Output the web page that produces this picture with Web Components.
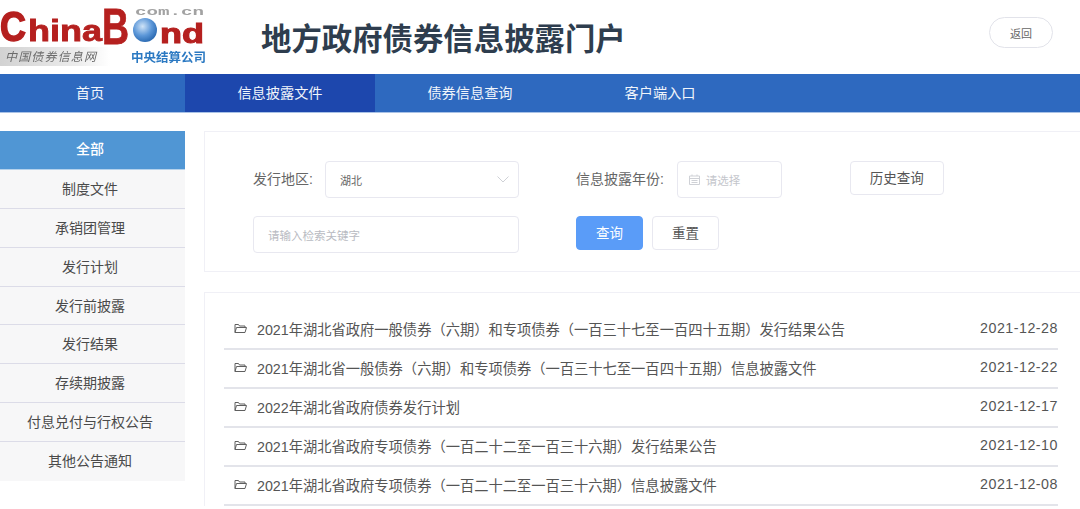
<!DOCTYPE html>
<html>
  <head>
    <meta charset="utf-8" />
    <meta name="viewport" content="width=device-width,initial-scale=1" />
    <title>地方政府债券信息披露门户</title>
    <style>
      html, body {
        margin: 0;
        height: 509px;
        overflow: hidden;
        background: #fff;
        font-family: "Liberation Sans", "Noto Sans CJK SC", sans-serif;
      }
    </style>

    <template id="headerTemplate">
      <style>
        :host {
          display: flex;
          align-items: flex-start;
          height: 74px;
          color: #2f3f50;
        }
        svg {
          display: block;
          flex: none;
          filter: blur(0.7px);
        }
        h1 {
          margin: 0 0 0 53px;
          font-size: 30.4px;
          line-height: 78px;
          font-weight: 700;
          color: #2e3d4e;
          flex: 1;
        }
        button {
          width: 64px;
          height: 31px;
          margin: 17px 27px 0 0;
          padding: 0;
          border: 1px solid #e2e3ea;
          border-radius: 16px;
          background: #fff;
          color: #666;
          font: 11px "Liberation Sans", "Noto Sans CJK SC", sans-serif;
        }
      </style>
      <svg width="208" height="74" viewBox="0 0 208 74">
        <defs>
          <radialGradient id="globe" cx="0.4" cy="0.35" r="0.7">
            <stop offset="0" stop-color="#cfe3f7" />
            <stop offset="0.55" stop-color="#5c97d8" />
            <stop offset="1" stop-color="#2565ae" />
          </radialGradient>
          <linearGradient id="band" x1="0" x2="1" y1="0" y2="0">
            <stop offset="0" stop-color="#d2d2d2" />
            <stop offset="0.7" stop-color="#ececec" />
            <stop offset="1" stop-color="#fff" />
          </linearGradient>
        </defs>
        <rect x="0" y="47" width="110" height="19" fill="url(#band)" />
        <g font-family="Liberation Sans" font-weight="700" fill="#b5201f" stroke="#b5201f">
          <text x="0" y="41" font-size="42" stroke-width="1.5" textLength="26" lengthAdjust="spacingAndGlyphs">C</text>
          <text x="28" y="41" font-size="29" stroke-width="0.8" textLength="74" lengthAdjust="spacingAndGlyphs">hina</text>
          <text x="102" y="44" font-size="50" stroke-width="0.8" textLength="27" lengthAdjust="spacingAndGlyphs">B</text>
          <text x="160" y="43" font-size="27" stroke-width="1" textLength="44" lengthAdjust="spacingAndGlyphs">nd</text>
        </g>
        <circle cx="145" cy="30" r="12" fill="url(#globe)" />
        <text x="135" y="14.500" font-family="Liberation Mono" font-weight="700" font-size="11" fill="#a2a2a2" textLength="69" lengthAdjust="spacingAndGlyphs">com.cn</text>
        <text x="5" y="61" font-family="Noto Sans CJK SC" font-style="italic" font-size="12" fill="#6b6b6b" textLength="91">中国债券信息网</text>
        <text x="131" y="62" font-family="Noto Sans CJK SC" font-weight="700" font-size="12.500" fill="#2b79c2" textLength="75">中央结算公司</text>
      </svg>
      <h1><slot></slot></h1>
      <button>返回</button>
    </template>

    <template id="navTemplate">
      <style>
        :host {
          display: grid;
          grid-template-columns: 185px 190px 190px 190px 1fr;
          height: 38px;
          background: #2e69bf;
          border-bottom: 1px solid #a9c2e6;
          color: #fff;
        }
      </style>
      <slot></slot>
    </template>

    <template id="navItemTemplate">
      <style>
        :host {
          display: block;
          text-align: center;
          font-size: 14.2px;
          line-height: 38px;
          color: #f1f5fb;
        }
        :host([active]) {
          background: #1d47ad;
        }
        :host([first]) {
          padding-right: 5px;
        }
      </style>
      <slot></slot>
    </template>

    <template id="sideMenuTemplate">
      <style>
        :host {
          display: block;
          flex: none;
          width: 185px;
          align-self: flex-start;
        }
      </style>
      <slot></slot>
    </template>

    <template id="sideItemTemplate">
      <style>
        :host {
          display: block;
          box-sizing: border-box;
          height: 38.9px;
          padding-right: 5px;
          line-height: 38px;
          text-align: center;
          font-size: 14px;
          color: #4a4a4a;
          background: #f7f7f8;
          border-bottom: 1px solid #dcdce8;
        }
        :host(:last-child) {
          border-bottom: 0;
        }
        :host([active]) {
          line-height: 37px;
          background: #5096d4;
          color: #fff;
          font-weight: 500;
          border-bottom-color: #b5d2ec;
        }
      </style>
      <slot></slot>
    </template>

    <template id="filterTemplate">
      <style>
        :host {
          display: block;
          box-sizing: border-box;
          height: 141px;
          padding: 29px 0 0 48px;
          border: 1px solid #f0f0f6;
          border-right: 0;
          font-size: 14px;
          color: #666;
        }
        .row {
          display: flex;
          align-items: flex-start;
        }
        .row + .row {
          margin-top: 18px;
        }
        .label {
          line-height: 37px;
          white-space: nowrap;
        }
        .box {
          box-sizing: border-box;
          height: 37px;
          border: 1px solid #e8e8f0;
          border-radius: 4px;
          display: flex;
          align-items: center;
          font-size: 11px;
        }
        .region {
          width: 194px;
          margin-left: 12px;
          padding: 0 9px 0 14px;
          justify-content: space-between;
          color: #666;
        }
        .year-label {
          margin-left: 57px;
        }
        .year {
          width: 105px;
          margin-left: 13px;
          padding-left: 11px;
          gap: 6px;
          font-size: 11.500px;
          color: #c4c6cc;
        }
        .keyword {
          width: 266px;
          padding-left: 14px;
          font-size: 11.500px;
          color: #b9bbc2;
        }
        button {
          box-sizing: border-box;
          height: 34px;
          padding: 0 0 2px;
          border: 1px solid #e8e8f0;
          border-radius: 4px;
          background: #fff;
          color: #555;
          font: 13.500px "Liberation Sans", "Noto Sans CJK SC", sans-serif;
        }
        .history {
          width: 94px;
          margin-left: 68px;
        }
        .query {
          width: 67px;
          margin-left: 57px;
          background: #5a9cf8;
          border-color: #5a9cf8;
          color: #fff;
        }
        .reset {
          width: 67px;
          margin-left: 9px;
        }
      </style>
      <div class="row">
        <span class="label">发行地区:</span>
        <div class="box region">
          <span>湖北</span>
          <svg width="12" height="7" viewBox="0 0 12 7" fill="none" stroke="#cfd1d6"><path d="M.5.5 6 6l5.500-5.500" /></svg>
        </div>
        <span class="label year-label">信息披露年份:</span>
        <div class="box year">
          <svg width="11" height="11" viewBox="0 0 11 11" fill="none" stroke="#cfd1d6"><path d="M.5 2h10v8.500H.5zM.5 4.500h10M3 .5V2M8 .5V2M2.500 6.500h6M2.500 8.500h6" /></svg>
          <span>请选择</span>
        </div>
        <button class="history">历史查询</button>
      </div>
      <div class="row">
        <div class="box keyword">请输入检索关键字</div>
        <button class="query">查询</button>
        <button class="reset">重置</button>
      </div>
    </template>

    <template id="docListTemplate">
      <style>
        :host {
          display: block;
          margin-top: 20px;
          padding: 18px 22px 0 19px;
          border: 1px solid #f0f0f6;
          border-right: 0;
          border-bottom: 0;
        }
      </style>
      <slot></slot>
    </template>

    <template id="docRowTemplate">
      <style>
        :host {
          display: flex;
          align-items: center;
          box-sizing: border-box;
          height: 39px;
          padding-bottom: 3px;
          border-bottom: 2px solid #e3e4ea;
          font-size: 14.270px;
          color: #555;
          white-space: nowrap;
        }
        svg {
          flex: none;
          margin: 0 10px;
        }
        .name {
          flex: 1;
        }
        .date {
          letter-spacing: 0.5px;
        }
      </style>
      <svg width="13" height="11" viewBox="0 0 13 11" fill="none" stroke="#5f5f5f"><path d="M1 9.500V1.500h3.500l1 1.500h5.500v1.500M1 9.500 2.500 4.500h10L11 9.500z" /></svg>
      <span class="name"><slot></slot></span>
      <span class="date" id="date"></span>
    </template>

    <script type="module">
      // Each element only clones its template; the page content stays in the markup.
      class TemplateElement extends HTMLElement {
        connectedCallback() {
          if (!this.shadowRoot) {
            const root = this.attachShadow({ mode: 'open' });
            root.appendChild(document.importNode(this.constructor.template.content, true));
            this.render?.(root);
          }
        }
      }

      const define = (name, template, extra = {}) => {
        const cls = class extends TemplateElement {
          static template = document.getElementById(template);
        };
        Object.assign(cls.prototype, extra);
        customElements.define(name, cls);
      };

      define('site-header', 'headerTemplate');
      define('site-nav', 'navTemplate');
      define('nav-item', 'navItemTemplate');
      define('side-menu', 'sideMenuTemplate');
      define('side-item', 'sideItemTemplate');
      define('filter-panel', 'filterTemplate');
      define('doc-list', 'docListTemplate');
      define('doc-row', 'docRowTemplate', {
        render(root) {
          root.getElementById('date').textContent = this.getAttribute('date');
        },
      });
    </script>
  </head>

  <body>
    <site-header>地方政府债券信息披露门户</site-header>
    <site-nav>
      <nav-item first>首页</nav-item>
      <nav-item active>信息披露文件</nav-item>
      <nav-item>债券信息查询</nav-item>
      <nav-item>客户端入口</nav-item>
    </site-nav>
    <div style="display: flex; gap: 19px; padding-top: 18px">
      <side-menu>
        <side-item active>全部</side-item>
        <side-item>制度文件</side-item>
        <side-item>承销团管理</side-item>
        <side-item>发行计划</side-item>
        <side-item>发行前披露</side-item>
        <side-item>发行结果</side-item>
        <side-item>存续期披露</side-item>
        <side-item>付息兑付与行权公告</side-item>
        <side-item>其他公告通知</side-item>
      </side-menu>
      <div style="flex: 1; min-width: 0">
        <filter-panel></filter-panel>
        <doc-list>
          <doc-row date="2021-12-28">2021年湖北省政府一般债券（六期）和专项债券（一百三十七至一百四十五期）发行结果公告</doc-row>
          <doc-row date="2021-12-22">2021年湖北省一般债券（六期）和专项债券（一百三十七至一百四十五期）信息披露文件</doc-row>
          <doc-row date="2021-12-17">2022年湖北省政府债券发行计划</doc-row>
          <doc-row date="2021-12-10">2021年湖北省政府专项债券（一百二十二至一百三十六期）发行结果公告</doc-row>
          <doc-row date="2021-12-08">2021年湖北省政府专项债券（一百二十二至一百三十六期）信息披露文件</doc-row>
        </doc-list>
      </div>
    </div>
  </body>
</html>
